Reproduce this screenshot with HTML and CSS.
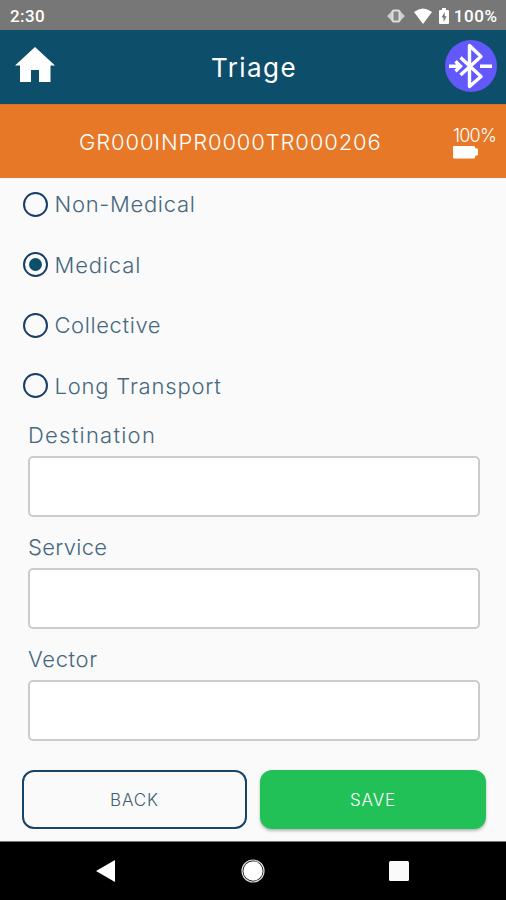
FILE: index.html
```html
<!DOCTYPE html>
<html lang="en">
<head>
<meta charset="utf-8">
<title>Triage</title>
<link rel="stylesheet" href="styles.css">
</head>
<body>
<div class="status">
  <span class="clock">2:30</span>
  <div class="status-icons">
    <svg class="vibrate" width="18" height="16" viewBox="0 0 18 16"><path d="M0 8l5-5v10zM18 8l-5-5v10z" fill="#ccc"/><rect x="5.5" y="2.5" width="7" height="11" rx="1.5" fill="#888" stroke="#ddd" stroke-width="2"/></svg>
    <svg class="wifi" width="18" height="16" viewBox="0 0 18 16"><path d="M0 4Q9-3 18 4L9 16z" fill="#fff"/></svg>
    <svg class="charge" width="10" height="16" viewBox="0 0 10 16"><path d="M3 0h4v2h2q1 0 1 1v12q0 1-1 1H1q-1 0-1-1V3q0-1 1-1h2z" fill="#fff"/><path d="M5.7 4L2.5 9.5h2V14l3.2-5.7h-2z" fill="#777"/></svg>
    <span class="status-level">100%</span>
  </div>
</div>
<header class="header">
  <svg class="home" width="40" height="36" viewBox="0 0 40 36"><path d="M20 0L40 18.5H35.5V35H24V23H16V35H5V18.5H0z" fill="#fff"/></svg>
  <h1><span class="title">Triage</span></h1>
  <svg class="bluetooth" width="52" height="52" viewBox="0 0 52 52"><circle cx="26" cy="26" r="26" fill="#6358fb"/><g fill="none" stroke="#fff" stroke-width="3.4"><path d="M15.5 17.5L36 36.5L24.5 46.5V5.5L36 16.5L15.5 35" stroke-linejoin="round"/><path d="M4 26.3H15M10.5 21.3L15.5 26.3L10.5 31.3M35 26.3H47"/></g></svg>
</header>
<section class="patient">
  <span class="code">GR000INPR0000TR000206</span>
  <div class="battery"><span class="level">100%</span>
    <svg width="26" height="13" viewBox="0 0 26 13"><path d="M1 0h20q1 0 1.5 2.5H24q1 0 1 1v5q0 1-1 1h-1.5Q22 12.5 21 12.5H1q-1 0-1-1V1q0-1 1-1z" fill="#fff"/></svg>
  </div>
</section>
<main>
  <div class="choices">
    <label class="choice"><i class="radio"></i><span class="non-medical">Non-Medical</span></label>
    <label class="choice"><i class="radio checked"></i><span class="medical">Medical</span></label>
    <label class="choice"><i class="radio"></i><span class="collective">Collective</span></label>
    <label class="choice"><i class="radio"></i><span class="transport">Long Transport</span></label>
  </div>
  <div class="fields">
    <label class="field"><span class="destination">Destination</span><input type="text"></label>
    <label class="field"><span class="service">Service</span><input type="text"></label>
    <label class="field"><span class="vector">Vector</span><input type="text"></label>
  </div>
  <div class="actions"><button class="back"><span>BACK</span></button><button class="save"><span>SAVE</span></button></div>
</main>
<nav class="navbar">
  <svg width="20" height="22" viewBox="0 0 20 22"><path d="M19 0V22L0 11z" fill="#fff"/></svg>
  <svg width="24" height="24" viewBox="0 0 24 24"><circle cx="12" cy="12" r="11" fill="none" stroke="#ddd" stroke-width="1.2"/><circle cx="12" cy="12" r="9.7" fill="#fff"/></svg>
  <svg width="20" height="20" viewBox="0 0 20 20"><rect width="20" height="20" rx="1.5" fill="#fafafa"/></svg>
</nav>
</body>
</html>
```
FILE: styles.css
```css
* { box-sizing: border-box; }
body { margin: 0; width: 506px; height: 900px; display: flex; flex-direction: column; overflow: hidden; background: #fafafa; font-family: Inter, "Liberation Sans", sans-serif; }
svg { display: block; flex: none; }
span { white-space: nowrap; }
.status { height: 30px; padding: 2px 9px 0 10px; display: flex; align-items: center; justify-content: space-between; background: #777; color: #fff; font: 500 17px/28px Roboto, sans-serif; }
.clock { letter-spacing: .4px; }
.status-icons { display: flex; align-items: center; }
.status-level { letter-spacing: .6px; margin-right: -.6px; }
.wifi { margin-left: 9px; }
.charge { margin: 0 5px 0 7px; }
.header { height: 74px; padding: 0 9px 0 15px; display: grid; grid-template-columns: 52px 1fr 52px; align-items: center; background: #0d4e6b; color: #fff; }
.home { margin-top: -5px; }
.bluetooth { margin-top: -2px; }
h1 { margin: 1px 4px 0 0; text-align: center; font-size: 26px; font-weight: 400; }
.title { letter-spacing: 1.4px; }
.patient { height: 74px; padding: 0 10px 0 79px; display: flex; align-items: center; justify-content: space-between; border-top: 1px solid #d9701f; background: #e77828; color: #fff; }
.code { margin-top: 1px; font-size: 22px; font-weight: 300; letter-spacing: .85px; }
.battery { width: 43px; margin-top: 2px; font-size: 18px; font-weight: 300; line-height: 20px; }
.level { display: block; letter-spacing: -.8px; }
main { height: 663px; color: #45687f; font-size: 22px; font-weight: 300; }
.choices { padding: 0 0 0 22.5px; margin-top: -4px; }
.choice { height: 60.5px; display: flex; align-items: center; gap: 7px; }
.radio { width: 25px; height: 25px; border: 2.5px solid #173e67; border-radius: 50%; display: grid; place-items: center; }
.checked::after { content: ""; width: 13px; height: 13px; border-radius: 50%; background: #0d4e6b; }
.non-medical { letter-spacing: .7px; }
.medical { letter-spacing: .85px; }
.collective { letter-spacing: .6px; }
.transport { letter-spacing: .8px; }
.destination { letter-spacing: 1.25px; }
.service { letter-spacing: .3px; }
.vector { letter-spacing: .6px; }
.fields { padding: 0 26px 0 28px; margin-top: 3px; display: grid; gap: 14px; }
.field { height: 98px; display: flex; flex-direction: column; justify-content: space-between; }
.field span { line-height: 32px; align-self: flex-start; }
input { width: 452px; height: 61px; border: 2px solid #ccc; border-radius: 5px; background: #fff; }
.actions { display: grid; grid-template-columns: 225px 226px; gap: 13px; padding-left: 22px; margin-top: 29px; }
button { height: 59px; border: 0; border-radius: 12px; font: 300 17px Inter, sans-serif; letter-spacing: .9px; }
.back { border: 2px solid #174468; background: #fafafa; color: #416075; }
.save { background: #22c158; color: #fff; box-shadow: 0 2px 3px #0004; }
.navbar { height: 59px; padding: 0 97px 0 96px; display: flex; align-items: center; justify-content: space-between; border-top: 1px solid #777; background: #000; }
```
